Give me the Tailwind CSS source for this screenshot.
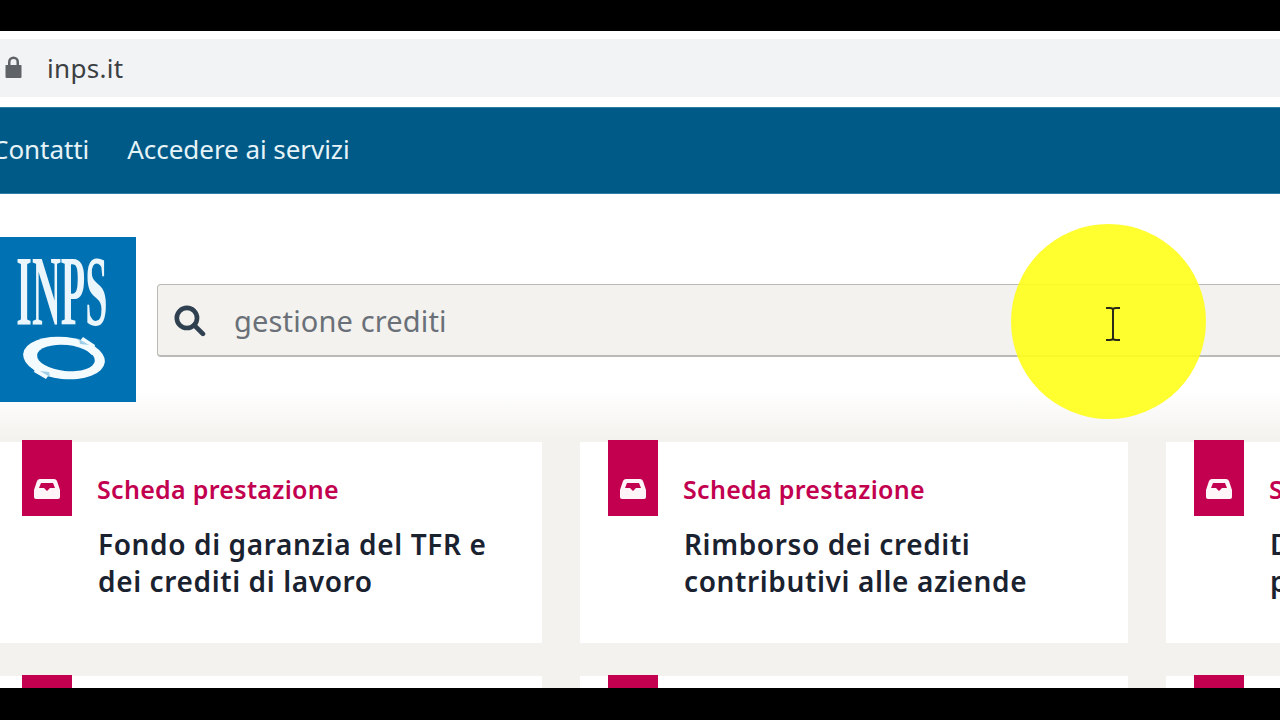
<!doctype html>
<html><head><meta charset="utf-8"><script src="https://cdn.jsdelivr.net/npm/@tailwindcss/browser@4"></script></head>
<body class="bg-black overflow-hidden">
<div class="relative w-[1280px] h-[720px] overflow-hidden bg-black font-['Noto_Sans',sans-serif]">
  <div class="mt-[31px] h-[657px] overflow-hidden bg-white flex flex-col">
    <div class="mt-[8px] h-[58px] bg-[#f1f3f4] flex items-center pl-[5px] shrink-0">
      <svg class="w-[17px] h-[24px] mb-[3px]" viewBox="0 0 17 24" fill="#5f6368"><path d="M1 10h2V7a5.500 5.500 0 0 1 11 0v3h2a.5.500 0 0 1 .5.500V22a1 1 0 0 1-1 1H1.500a1 1 0 0 1-1-1V10.500A.5.500 0 0 1 1 10zm4.500 0h6V7a3 3 0 0 0-6 0z"/></svg>
      <span class="ml-[25px] text-[26px] leading-none text-[#3c4043] tracking-[0.3px]">inps.it</span>
    </div>
    <div class="mt-[10px] h-[87px] bg-[#005a87] shrink-0 flex items-center pb-[3px] -ml-[8px] gap-[38px] text-[#e6f3f7] text-[26px] tracking-[-0.05px] border-y border-[#2f7da3]">
      <span>Contatti</span><span>Accedere ai servizi</span>
    </div>
    <div class="h-[246px] shrink-0 pt-[43px] bg-gradient-to-b from-white from-[80%] to-[#f3f2ee] flex items-start">
      <div class="w-[136px] h-[165px] bg-[#0072b4] flex flex-col items-center overflow-hidden">
        <span class="block mt-[10px] h-[88px] leading-[88px] text-[100px] font-bold text-[#eaf6fb] font-['Liberation_Serif',serif] scale-x-[0.4] whitespace-nowrap -translate-x-[6px]">INPS</span>
        <svg class="w-[90px] h-[50px] -mt-[2px] -translate-x-[4px]" viewBox="0 0 90 50">
          <ellipse cx="45" cy="25" rx="41" ry="21" fill="#f4fbfe" transform="rotate(6 45 25)"/>
          <ellipse cx="47" cy="25" rx="29" ry="13" fill="#0072b4" transform="rotate(6 47 25)"/>
          <path d="M64 4l12 8-3 10-7-6-9-3zM27 46l-12-7 3-11 7 6 9 2z" fill="#f4fbfe"/>
          <path d="M60 6l10 6-9-1zM31 44l-10-6 9 1z" fill="#9fcfe6"/>
        </svg>
      </div>
      <div class="ml-[21px] mt-[47px] flex-1 h-[73px] -mr-[8px] rounded-[4px] border border-[#b9b9b6] border-b-2 bg-[#f3f2ee] flex items-center pl-[15px]">
        <svg class="w-[33px] h-[33px]" viewBox="0 0 32 32" fill="none" stroke="#2f4050" stroke-width="4.500"><circle cx="13.500" cy="13.500" r="9.800"/><path d="M20.500 20.500l8.500 8.500" stroke-linecap="round"/></svg>
        <span class="ml-[28px] text-[29px] leading-none text-[#6a7078] tracking-[0.15px]">gestione crediti</span>
      </div>
    </div>
    <div class="bg-[#f3f2ee] flex-1 pt-[2px] -ml-[6px] w-[1800px] grid grid-cols-[548px_548px_548px] gap-x-[38px] gap-y-[33px] content-start">
      <article class="relative h-[201px] bg-white pl-[103px] pt-[29px]">
        <div class="absolute left-[28px] -top-[2px] w-[50px] h-[76px] bg-[#c2004f] flex items-center justify-center pt-[22px]">
          <svg class="w-[28px] h-[22px]" viewBox="0 0 28 22"><path d="M7 1h14q2 0 3 2l3 9v7a2 2 0 0 1-2 2H3a2 2 0 0 1-2-2v-7l3-9q1-2 3-2z" fill="#fdf5f8"/><path d="M8 5h12l2 5h-5l-3 3-3-3H6z" fill="#c2004f"/></svg>
        </div>
        <div class="text-[#c2004f] text-[25px] leading-[36px] font-semibold tracking-[0.3px]">Scheda prestazione</div>
        <div class="mt-[19px] ml-[1px] text-[#1a2230] text-[28px] leading-[37px] font-semibold tracking-[0.62px]">Fondo di garanzia del TFR e<br>dei crediti di lavoro</div>
      </article>
      <article class="relative h-[201px] bg-white pl-[103px] pt-[29px]">
        <div class="absolute left-[28px] -top-[2px] w-[50px] h-[76px] bg-[#c2004f] flex items-center justify-center pt-[22px]">
          <svg class="w-[28px] h-[22px]" viewBox="0 0 28 22"><path d="M7 1h14q2 0 3 2l3 9v7a2 2 0 0 1-2 2H3a2 2 0 0 1-2-2v-7l3-9q1-2 3-2z" fill="#fdf5f8"/><path d="M8 5h12l2 5h-5l-3 3-3-3H6z" fill="#c2004f"/></svg>
        </div>
        <div class="text-[#c2004f] text-[25px] leading-[36px] font-semibold tracking-[0.3px]">Scheda prestazione</div>
        <div class="mt-[19px] ml-[1px] text-[#1a2230] text-[28px] leading-[37px] font-semibold tracking-[0.62px]">Rimborso dei crediti<br>contributivi alle aziende</div>
      </article>
      <article class="relative h-[201px] bg-white pl-[103px] pt-[29px]">
        <div class="absolute left-[28px] -top-[2px] w-[50px] h-[76px] bg-[#c2004f] flex items-center justify-center pt-[22px]">
          <svg class="w-[28px] h-[22px]" viewBox="0 0 28 22"><path d="M7 1h14q2 0 3 2l3 9v7a2 2 0 0 1-2 2H3a2 2 0 0 1-2-2v-7l3-9q1-2 3-2z" fill="#fdf5f8"/><path d="M8 5h12l2 5h-5l-3 3-3-3H6z" fill="#c2004f"/></svg>
        </div>
        <div class="text-[#c2004f] text-[25px] leading-[36px] font-semibold tracking-[0.3px]">Scheda prestazione</div>
        <div class="mt-[19px] ml-[1px] text-[#1a2230] text-[28px] leading-[37px] font-semibold tracking-[0.62px]">Domanda<br>prestazione</div>
      </article>
      <article class="relative h-[201px] bg-white"><div class="absolute left-[28px] -top-[1px] w-[50px] h-[76px] bg-[#c2004f]"></div></article>
      <article class="relative h-[201px] bg-white"><div class="absolute left-[28px] -top-[1px] w-[50px] h-[76px] bg-[#c2004f]"></div></article>
      <article class="relative h-[201px] bg-white"><div class="absolute left-[28px] -top-[1px] w-[50px] h-[76px] bg-[#c2004f]"></div></article>
    </div>
  </div>
  <div class="absolute left-[1011px] top-[224px] w-[195px] h-[195px] rounded-full bg-[#ffff19]/90"></div>
  <svg class="absolute left-[1104px] top-[305px] w-[18px] h-[38px]" viewBox="0 0 18 38" fill="none" stroke="#2a2a18" stroke-width="2"><path d="M2 3h4c2 0 3 1 3 2v28c0 1-1 2-3 2H2M16 3h-4c-2 0-3 1-3 2v28c0 1 1 2 3 2h4"/></svg>
</div>
</body></html>
